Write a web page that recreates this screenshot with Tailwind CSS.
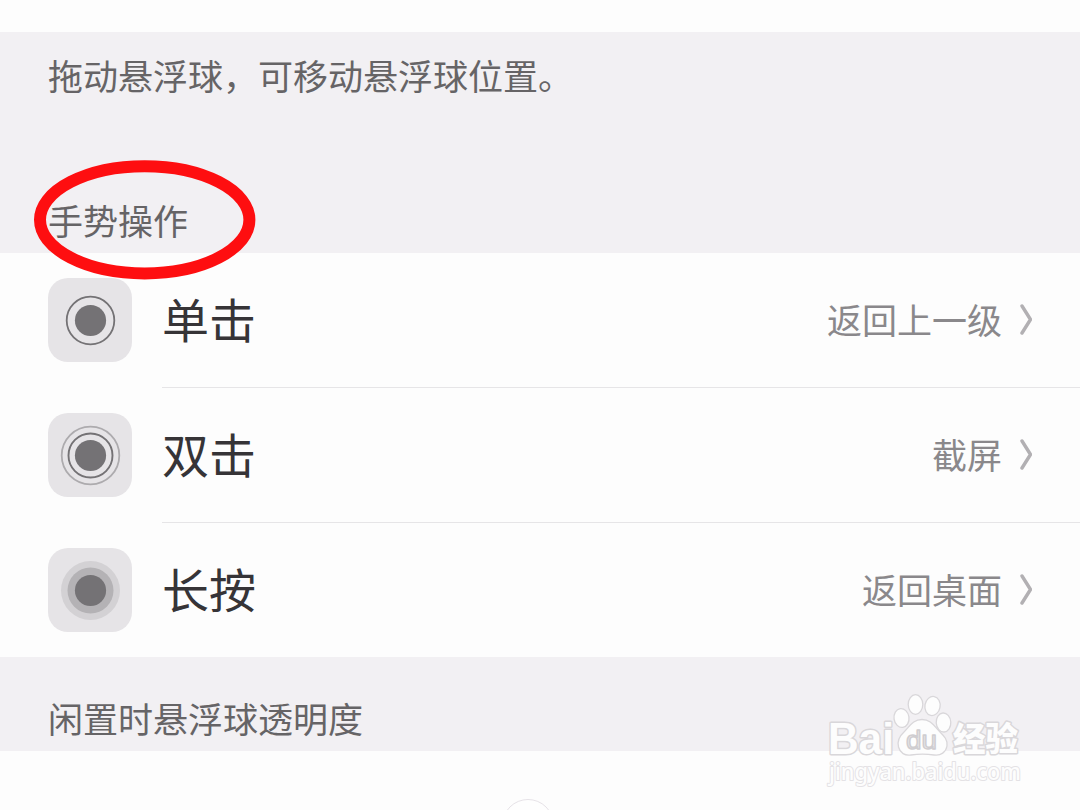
<!DOCTYPE html>
<html lang="zh-CN">
<head>
  <meta charset="UTF-8" />
  <meta name="viewport" content="width=device-width, initial-scale=1.0" />
  <title>悬浮球</title>
  <script src="https://cdn.jsdelivr.net/npm/@tailwindcss/browser@4"></script>
  <style>
    body {
      font-family: 'Noto Sans CJK SC', sans-serif;
    }
  </style>
</head>
<body class="relative h-[810px] overflow-hidden bg-[#fdfdfd] text-[#666466]">

  <!-- 说明 -->
  <section class="mt-8 h-[221px] bg-[#f2f0f3] pl-12 flex flex-col justify-between text-[35px] leading-[46px]">
    <p class="pt-5">拖动悬浮球，可移动悬浮球位置。</p>
    <h2 class="pb-2.5">手势操作</h2>
  </section>

  <!-- 手势列表 -->
  <ul class="pl-12">
    <li class="flex h-[135px]">
      <svg class="mt-[25px] mr-[30px] size-[84px] shrink-0 rounded-[20px] bg-[#e6e4e7]" viewBox="0 0 84 84" fill="none">
        <circle cx="42.5" cy="42.5" r="23.8" stroke="#747275" stroke-width="1.8" />
        <circle cx="42.5" cy="42.5" r="15.6" fill="#747275" />
      </svg>
      <div class="flex flex-1 items-center justify-between border-b border-[#e6e5e7] pr-12">
        <span class="pb-[5px] text-[47px] leading-[60px] text-[#363437]">单击</span>
        <span class="flex items-center text-[35px] leading-[46px] text-[#8a888b]"><span class="pb-0.5">返回上一级</span>
          <svg class="ml-[18px] w-3 h-8" viewBox="0 0 12 32" fill="none" stroke="#b2b0b3" stroke-width="3.4" stroke-linecap="round" stroke-linejoin="round"><path d="M2 2L10.500 15.500L2 29" /></svg>
        </span>
      </div>
    </li>
    <li class="flex h-[135px]">
      <svg class="mt-[25px] mr-[30px] size-[84px] shrink-0 rounded-[20px] bg-[#e6e4e7]" viewBox="0 0 84 84" fill="none">
        <circle cx="42.5" cy="42.5" r="28.8" stroke="#adabae" stroke-width="1.8" />
        <circle cx="42.5" cy="42.5" r="22" stroke="#747275" stroke-width="1.9" />
        <circle cx="42.5" cy="42.5" r="15.6" fill="#747275" />
      </svg>
      <div class="flex flex-1 items-center justify-between border-b border-[#e6e5e7] pr-12">
        <span class="pb-[5px] text-[47px] leading-[60px] text-[#363437]">双击</span>
        <span class="flex items-center text-[35px] leading-[46px] text-[#8a888b]"><span class="pb-0.5">截屏</span>
          <svg class="ml-[18px] w-3 h-8" viewBox="0 0 12 32" fill="none" stroke="#b2b0b3" stroke-width="3.4" stroke-linecap="round" stroke-linejoin="round"><path d="M2 2L10.500 15.500L2 29" /></svg>
        </span>
      </div>
    </li>
    <li class="flex h-[134px]">
      <svg class="mt-[25px] mr-[30px] size-[84px] shrink-0 rounded-[20px] bg-[#e6e4e7]" viewBox="0 0 84 84" fill="none">
        <circle cx="42.5" cy="42.5" r="29.5" fill="#d3d1d4" />
        <circle cx="42.5" cy="42.5" r="23" fill="#b4b2b5" />
        <circle cx="42.5" cy="42.5" r="15.6" fill="#747275" />
      </svg>
      <div class="flex flex-1 items-center justify-between pr-12">
        <span class="pb-[5px] text-[47px] leading-[60px] text-[#363437]">长按</span>
        <span class="flex items-center text-[35px] leading-[46px] text-[#8a888b]"><span class="pb-0.5">返回桌面</span>
          <svg class="ml-[18px] w-3 h-8" viewBox="0 0 12 32" fill="none" stroke="#b2b0b3" stroke-width="3.4" stroke-linecap="round" stroke-linejoin="round"><path d="M2 2L10.500 15.500L2 29" /></svg>
        </span>
      </div>
    </li>
  </ul>

  <!-- 透明度 -->
  <section class="flex h-[94px] items-end bg-[#f2f0f3] pl-12 pb-2.5 text-[35px] leading-[46px]">
    <h2>闲置时悬浮球透明度</h2>
  </section>
  <svg class="mt-12 ml-[498px] block h-[11px] w-[60px]" viewBox="0 0 60 11" fill="#fefefe" stroke="#e6e2e7">
    <circle cx="30" cy="26" r="25.5" />
  </svg>

  <!-- 红圈标注 -->
  <svg class="absolute top-[150px] left-[24px]" width="242" height="140" viewBox="24 150 242 140" fill="none">
    <ellipse cx="144.7" cy="219.8" rx="104.7" ry="53.6" stroke="#fe0e10" stroke-width="12" />
  </svg>

  <!-- 水印 -->
  <svg class="absolute top-[680px] left-[810px]" width="230" height="130" viewBox="0 0 230 130" fill="#fdfdfd" stroke="#d9d7da" stroke-width="1.3" stroke-linejoin="round">
    <g font-family="Liberation Sans" font-weight="bold" paint-order="stroke" stroke-width="3">
      <text x="18" y="74" font-size="44" textLength="66" lengthAdjust="spacingAndGlyphs">Bai</text>
      <text x="143" y="71" font-size="33" font-family="Noto Sans CJK SC" font-weight="900" textLength="65" lengthAdjust="spacingAndGlyphs">经验</text>
    </g>
    <ellipse cx="91.5" cy="38" rx="7.5" ry="9.5" transform="rotate(-8 91.5 38)" />
    <ellipse cx="105.5" cy="24.5" rx="7.3" ry="9.8" />
    <ellipse cx="122.5" cy="26" rx="7.6" ry="9.6" transform="rotate(10 122.5 26)" />
    <ellipse cx="133.5" cy="42.5" rx="7.3" ry="9.5" transform="rotate(-4 133.5 42.5)" />
    <path d="M112 39.500C103 39.500 100 46 94 52C88.500 57 87 61 88.500 67C90 73 95 76 101 75C108 74 117 74 124 75C131 76 136 72 137 66C138 60 134 56 130 52C124 46 121 39.500 112 39.500Z" />
    <text x="96" y="69" font-size="26" font-family="Liberation Sans" fill="#e8e6e9" stroke="#cfcdd0" stroke-width="1.4" textLength="31" lengthAdjust="spacingAndGlyphs">du</text>
    <text x="19" y="100" font-size="23" font-family="Noto Sans" font-weight="500" paint-order="stroke" stroke="#e4e2e5" stroke-width="2" textLength="192" lengthAdjust="spacingAndGlyphs">jingyan.baidu.com</text>
  </svg>

</body>
</html>
